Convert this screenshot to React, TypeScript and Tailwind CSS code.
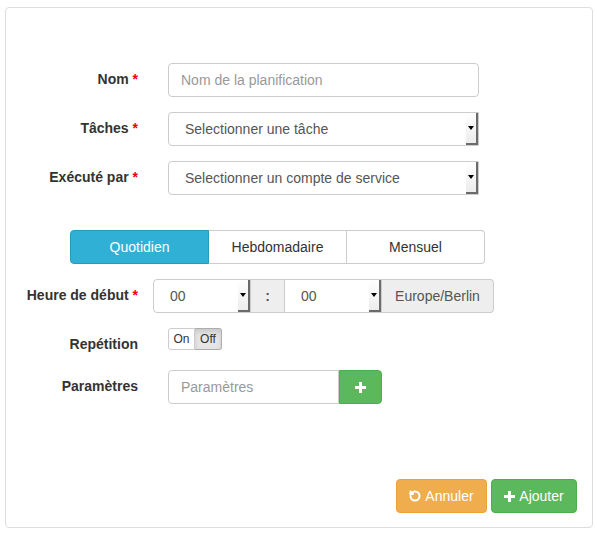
import React from 'react'
import { RotateCcw } from 'lucide-react'

function Label({ text, required }: { text: string; required?: boolean }) {
  return (
    <div className="w-[132px] shrink-0 text-right font-bold text-[14px] leading-[20px] text-[#333] pt-[6px]">
      {text}
      {required && <span className="text-[#ee0000]"> *</span>}
    </div>
  )
}

// glyphicon-like chunky plus
function PlusGlyph({ size = 11 }: { size?: number }) {
  return (
    <svg width={size} height={size} viewBox="0 0 11 11" fill="currentColor">
      <rect x="4" y="0" width="3" height="11" />
      <rect x="0" y="4" width="11" height="3" />
    </svg>
  )
}

function FakeSelect({ value, className }: { value: string; className: string }) {
  return (
    <div className={`relative h-[34px] border border-[#ccc] bg-white text-[14px] text-[#555] flex items-center ${className}`}>
      <span>{value}</span>
      {/* old-style native arrow box */}
      <div className="absolute right-0 top-0 bottom-0 w-[12px] bg-gradient-to-b from-white to-[#ececec] border-r-2 border-b-2 border-[#6b6b6b] flex items-center justify-center">
        <span className="block w-0 h-0 border-l-[3px] border-r-[3px] border-t-[4px] border-l-transparent border-r-transparent border-t-black" />
      </div>
    </div>
  )
}

export default function App() {
  return (
    <div className="pt-[7px] pl-[5px] bg-white min-h-[534px]" style={{ fontFamily: '"Liberation Sans", Arial, sans-serif' }}>
      <div className="w-[588px] h-[521px] border border-[#ddd] rounded-[4px] flex flex-col pt-[55px] pb-[14px] pr-[15px]">
        {/* Nom */}
        <div className="flex mb-[15px]">
          <Label text="Nom" required />
          <input
            placeholder="Nom de la planification"
            className="ml-[30px] w-[311px] h-[34px] border border-[#ccc] rounded-[4px] px-[12px] text-[14px] text-[#555] placeholder-[#999] outline-none"
          />
        </div>

        {/* Tâches */}
        <div className="flex mb-[15px]">
          <Label text="Tâches" required />
          <FakeSelect value="Selectionner une tâche" className="ml-[30px] w-[311px] rounded-l-[4px] pl-[16px]" />
        </div>

        {/* Exécuté par */}
        <div className="flex">
          <Label text="Exécuté par" required />
          <FakeSelect value="Selectionner un compte de service" className="ml-[30px] w-[311px] rounded-l-[4px] pl-[16px]" />
        </div>

        {/* frequency tabs */}
        <div className="flex ml-[64px] mt-[35px] mb-[15px] w-[415px] h-[34px] text-[14px]">
          <button className="flex-1 bg-[#31b0d5] border border-[#269abc] text-white rounded-l-[4px]">Quotidien</button>
          <button className="flex-1 bg-white border border-[#ccc] border-l-0 text-[#333]">Hebdomadaire</button>
          <button className="flex-1 bg-white border border-[#ccc] border-l-0 text-[#333] rounded-r-[4px]">Mensuel</button>
        </div>

        {/* Heure de début */}
        <div className="flex mb-[15px]">
          <Label text="Heure de début" required />
          <div className="ml-[15px] flex h-[34px]">
            <FakeSelect value="00" className="w-[98px] rounded-l-[4px] pl-[16px]" />
            <div className="w-[33px] h-[34px] bg-[#eee] border-y border-[#ccc] flex items-center justify-center font-bold text-[14px] text-[#555]">:</div>
            <FakeSelect value="00" className="w-[98px] pl-[16px]" />
            <div className="w-[112px] h-[34px] bg-[#eee] border border-l-0 border-[#ccc] rounded-r-[4px] flex items-center justify-center text-[14px] text-[#555]">
              Europe/Berlin
            </div>
          </div>
        </div>

        {/* Repétition */}
        <div className="flex mb-[16px]">
          <Label text="Repétition" />
          <div className="ml-[30px] flex h-[22px] text-[12px] leading-none text-[#333]">
            <div className="w-[27px] border border-[#ccc] rounded-l-[3px] bg-white flex items-center justify-center">On</div>
            <div className="w-[27px] border border-l-0 border-[#adadad] rounded-r-[3px] bg-[#e6e6e6] shadow-[inset_0_3px_5px_rgba(0,0,0,0.125)] flex items-center justify-center">Off</div>
          </div>
        </div>

        {/* Paramètres */}
        <div className="flex">
          <Label text="Paramètres" />
          <div className="ml-[30px] flex h-[34px]">
            <input
              placeholder="Paramètres"
              className="w-[171px] h-[34px] border border-[#ccc] rounded-l-[4px] px-[12px] text-[14px] text-[#555] placeholder-[#999] outline-none"
            />
            <button className="w-[43px] h-[34px] bg-[#5cb85c] border border-[#4cae4c] rounded-r-[4px] flex items-center justify-center text-white">
              <PlusGlyph size={11} />
            </button>
          </div>
        </div>

        {/* footer actions */}
        <div className="mt-auto flex justify-end gap-[4px]">
          <button className="h-[34px] w-[91px] bg-[#f0ad4e] border border-[#eea236] rounded-[4px] text-white text-[14px] flex items-center justify-center gap-[4px]">
            <RotateCcw size={12} strokeWidth={4} />
            Annuler
          </button>
          <button className="h-[34px] w-[86px] bg-[#5cb85c] border border-[#4cae4c] rounded-[4px] text-white text-[14px] flex items-center justify-center gap-[4px]">
            <PlusGlyph size={11} />
            Ajouter
          </button>
        </div>
      </div>
    </div>
  )
}
